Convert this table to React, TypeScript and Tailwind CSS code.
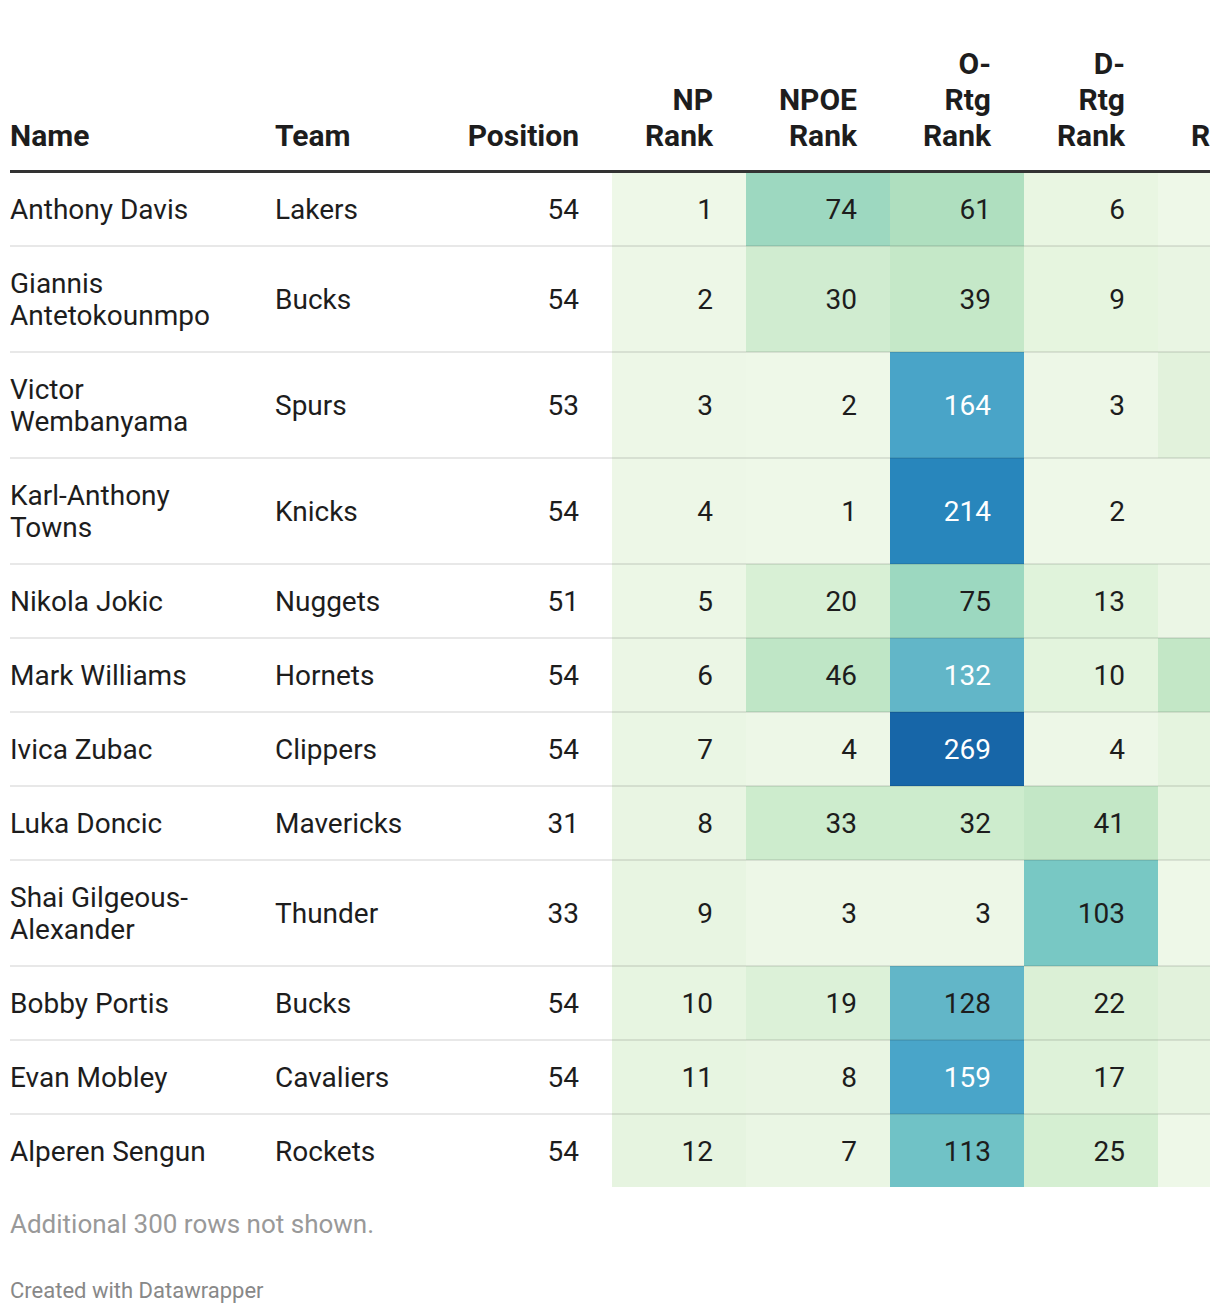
import React from "react";

type Cell = { v: number; bg: string; light?: boolean };
type Row = { name: string; team: string; pos: number; cells: Cell[] };

const rows: Row[] = [
  {
    name: "Anthony Davis",
    team: "Lakers",
    pos: 54,
    cells: [
      { v: 1, bg: "bg-[#eef8e8]" },
      { v: 74, bg: "bg-[#9dd8c0]" },
      { v: 61, bg: "bg-[#afdfbf]" },
      { v: 6, bg: "bg-[#e9f6e2]" },
      { v: 2, bg: "bg-[#eef8e8]" },
    ],
  },
  {
    name: "Giannis Antetokounmpo",
    team: "Bucks",
    pos: 54,
    cells: [
      { v: 2, bg: "bg-[#edf7e7]" },
      { v: 30, bg: "bg-[#d0ecd0]" },
      { v: 39, bg: "bg-[#c5e8c8]" },
      { v: 9, bg: "bg-[#e6f5df]" },
      { v: 8, bg: "bg-[#e9f5e3]" },
    ],
  },
  {
    name: "Victor Wembanyama",
    team: "Spurs",
    pos: 53,
    cells: [
      { v: 3, bg: "bg-[#edf7e7]" },
      { v: 2, bg: "bg-[#eef8e8]" },
      { v: 164, bg: "bg-[#49a4c8]", light: true },
      { v: 3, bg: "bg-[#edf7e7]" },
      { v: 14, bg: "bg-[#e2f2dc]" },
    ],
  },
  {
    name: "Karl-Anthony Towns",
    team: "Knicks",
    pos: 54,
    cells: [
      { v: 4, bg: "bg-[#edf7e7]" },
      { v: 1, bg: "bg-[#eef8e8]" },
      { v: 214, bg: "bg-[#2886bc]", light: true },
      { v: 2, bg: "bg-[#eef8e8]" },
      { v: 1, bg: "bg-[#eef8e8]" },
    ],
  },
  {
    name: "Nikola Jokic",
    team: "Nuggets",
    pos: 51,
    cells: [
      { v: 5, bg: "bg-[#ecf7e6]" },
      { v: 20, bg: "bg-[#d8f0d5]" },
      { v: 75, bg: "bg-[#9cd8c0]" },
      { v: 13, bg: "bg-[#e0f3db]" },
      { v: 5, bg: "bg-[#ebf6e5]" },
    ],
  },
  {
    name: "Mark Williams",
    team: "Hornets",
    pos: 54,
    cells: [
      { v: 6, bg: "bg-[#ebf6e5]" },
      { v: 46, bg: "bg-[#bfe6c6]" },
      { v: 132, bg: "bg-[#62b6c8]", light: true },
      { v: 10, bg: "bg-[#e3f4dd]" },
      { v: 52, bg: "bg-[#c3e7c6]" },
    ],
  },
  {
    name: "Ivica Zubac",
    team: "Clippers",
    pos: 54,
    cells: [
      { v: 7, bg: "bg-[#eaf6e4]" },
      { v: 4, bg: "bg-[#edf7e7]" },
      { v: 269, bg: "bg-[#1766a8]", light: true },
      { v: 4, bg: "bg-[#edf7e7]" },
      { v: 12, bg: "bg-[#e5f4df]" },
    ],
  },
  {
    name: "Luka Doncic",
    team: "Mavericks",
    pos: 31,
    cells: [
      { v: 8, bg: "bg-[#e9f5e3]" },
      { v: 33, bg: "bg-[#cdeccd]" },
      { v: 32, bg: "bg-[#cdeccd]" },
      { v: 41, bg: "bg-[#c3e7c6]" },
      { v: 12, bg: "bg-[#e5f4df]" },
    ],
  },
  {
    name: "Shai Gilgeous-Alexander",
    team: "Thunder",
    pos: 33,
    cells: [
      { v: 9, bg: "bg-[#e8f5e2]" },
      { v: 3, bg: "bg-[#edf7e7]" },
      { v: 3, bg: "bg-[#edf7e7]" },
      { v: 103, bg: "bg-[#78c8c4]" },
      { v: 1, bg: "bg-[#eef8e8]" },
    ],
  },
  {
    name: "Bobby Portis",
    team: "Bucks",
    pos: 54,
    cells: [
      { v: 10, bg: "bg-[#e7f5e1]" },
      { v: 19, bg: "bg-[#dcf1d8]" },
      { v: 128, bg: "bg-[#62b6c8]" },
      { v: 22, bg: "bg-[#dbf0d6]" },
      { v: 15, bg: "bg-[#e2f2dc]" },
    ],
  },
  {
    name: "Evan Mobley",
    team: "Cavaliers",
    pos: 54,
    cells: [
      { v: 11, bg: "bg-[#e7f5e1]" },
      { v: 8, bg: "bg-[#e9f5e3]" },
      { v: 159, bg: "bg-[#49a5c9]", light: true },
      { v: 17, bg: "bg-[#def2d9]" },
      { v: 7, bg: "bg-[#e8f5e2]" },
    ],
  },
  {
    name: "Alperen Sengun",
    team: "Rockets",
    pos: 54,
    cells: [
      { v: 12, bg: "bg-[#e6f4e0]" },
      { v: 7, bg: "bg-[#eaf6e4]" },
      { v: 113, bg: "bg-[#70c2c6]" },
      { v: 25, bg: "bg-[#d5efd2]" },
      { v: 1, bg: "bg-[#eef8e8]" },
    ],
  },
];

const App = () => {
  return (
    <div className="w-[1220px] bg-white px-[10px] pt-[46px] pb-[10px] overflow-hidden font-[Roboto,'Liberation_Sans',sans-serif] text-[#1d1d1d]">
      <div className="w-[1200px] overflow-hidden">
        <table className="table-fixed w-[1282px] border-collapse">
          <colgroup>
            <col className="w-[265px]" />
            <col className="w-[190px]" />
            <col className="w-[147px]" />
            <col className="w-[134px]" />
            <col className="w-[144px]" />
            <col className="w-[134px]" />
            <col className="w-[134px]" />
            <col className="w-[134px]" />
          </colgroup>
          <thead>
            <tr className="text-[30px] leading-[36px] font-bold border-b-[3px] border-[#333]">
              <th className="align-bottom text-left pb-[16px] pl-0">Name</th>
              <th className="align-bottom text-left pb-[16px] pl-0">Team</th>
              <th className="align-bottom text-right pb-[16px] pr-[33px]">Position</th>
              <th className="align-bottom text-right pb-[16px] pr-[33px]">
                NP
                <br />
                Rank
              </th>
              <th className="align-bottom text-right pb-[16px] pr-[33px]">
                NPOE
                <br />
                Rank
              </th>
              <th className="align-bottom text-right pb-[16px] pr-[33px]">
                O-
                <br />
                Rtg
                <br />
                Rank
              </th>
              <th className="align-bottom text-right pb-[16px] pr-[33px]">
                D-
                <br />
                Rtg
                <br />
                Rank
              </th>
              <th className="align-bottom text-right pb-[16px] pr-[33px] whitespace-nowrap">
                Rank
              </th>
            </tr>
          </thead>
          <tbody className="text-[28px] leading-[32px]">
            {rows.map((r, i) => (
              <tr
                key={r.name}
                className={
                  i < rows.length - 1
                    ? "border-b-2 border-[rgba(0,0,0,0.09)]"
                    : ""
                }
              >
                <td className="pt-[21px] pb-[19px] pr-[40px] align-middle">{r.name}</td>
                <td className="pt-[21px] pb-[19px] align-middle">{r.team}</td>
                <td className="pt-[21px] pb-[19px] pr-[33px] text-right align-middle">
                  {r.pos}
                </td>
                {r.cells.map((c, j) => (
                  <td
                    key={j}
                    className={`pt-[21px] pb-[19px] pr-[33px] text-right align-middle ${c.bg} ${
                      c.light ? "text-white" : ""
                    }`}
                  >
                    {c.v}
                  </td>
                ))}
              </tr>
            ))}
          </tbody>
        </table>
      </div>
      <p className="mt-[23px] text-[26px] leading-[28px] text-[#999]">
        Additional 300 rows not shown.
      </p>
      <p className="mt-[41px] text-[22px] leading-[24px] text-[#888]">
        Created with Datawrapper
      </p>
    </div>
  );
};

export default App;
